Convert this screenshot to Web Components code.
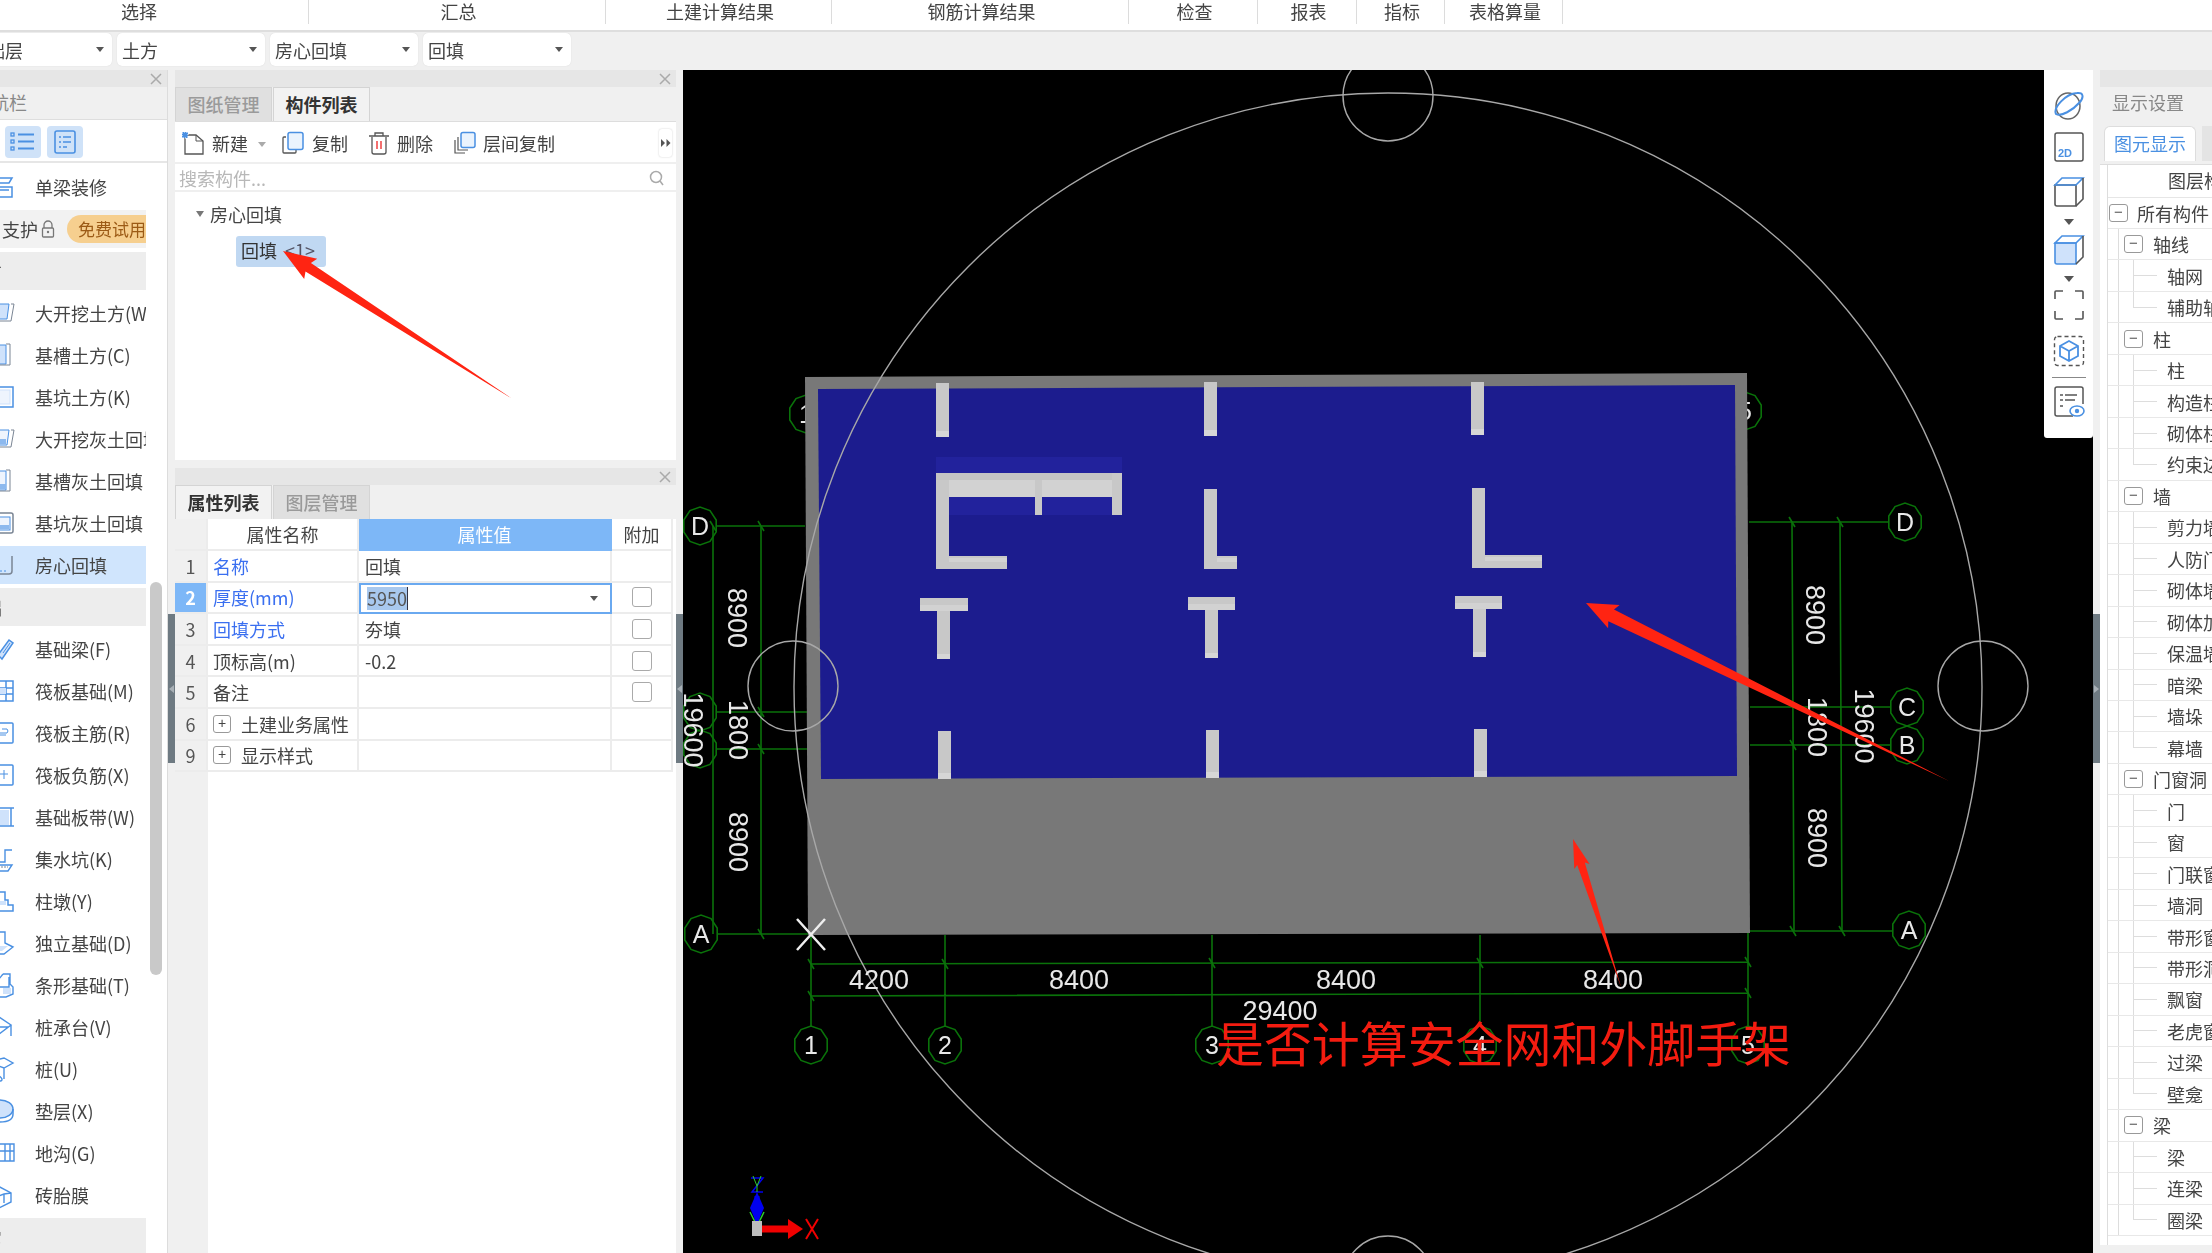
<!DOCTYPE html>
<html lang="zh">
<head>
<meta charset="utf-8">
<title>房心回填</title>
<style>
  html, body { margin: 0; padding: 0; width: 2212px; height: 1253px; overflow: hidden; background: #f0f0f0; }
  body { font-family: "Noto Sans CJK SC", "Liberation Sans", sans-serif; font-size: 18px; color: #444; }
</style>
</head>
<body>
<app-shell>
  <top-tabs></top-tabs>
  <combo-bar></combo-bar>
  <main-area>
    <nav-panel></nav-panel>
    <side-handle dir="left"></side-handle>
    <div style="width:501px;display:flex;flex-direction:column;flex:none">
      <component-panel></component-panel>
      <prop-panel></prop-panel>
    </div>
    <side-handle dir="left"></side-handle>
    <cad-view><view-tools></view-tools></cad-view>
    <side-handle dir="right"></side-handle>
    <display-panel></display-panel>
  </main-area>
  <annot-layer></annot-layer>
</app-shell>

<script>
const BLUE = '#4a90e2', GREY = '#7a8594', FILL = '#cfe2fb';

class AppShell extends HTMLElement {
  constructor() {
    super();
    this.attachShadow({ mode: 'open' }).innerHTML = `
      <style>
        :host { display: flex; flex-direction: column; position: relative; width: 2212px; height: 1253px; overflow: hidden; filter: blur(.45px); }
      </style>
      <slot></slot>`;
  }
}

class MainArea extends HTMLElement {
  constructor() {
    super();
    this.attachShadow({ mode: 'open' }).innerHTML = `
      <style>:host { display: flex; height: 1183px; flex: none; }</style><slot></slot>`;
  }
}

class TopTabs extends HTMLElement {
  constructor() {
    super();
    // widths come from the separators in the reference
    const tabs = [['选择', 342], ['汇总', 297], ['土建计算结果', 226], ['钢筋计算结果', 297], ['检查', 129], ['报表', 99], ['指标', 88], ['表格算量', 118]];
    this.attachShadow({ mode: 'open' }).innerHTML = `
      <style>
        :host { display: flex; height: 30px; background: #fff; border-bottom: 2px solid #dedede; flex: none; }
        div { height: 24px; line-height: 22px; text-align: center; padding-left: 3px; border-right: 1px solid #dcdcdc; box-sizing: border-box; flex: none; color: #444; }
        div:first-of-type { margin-left: -33px; }
      </style>
      ${tabs.map(([t, w]) => `<div style="width:${w}px">${t}</div>`).join('')}`;
  }
}

class ComboBar extends HTMLElement {
  constructor() {
    super();
    const combos = ['基础层', '土方', '房心回填', '回填'];
    this.attachShadow({ mode: 'open' }).innerHTML = `
      <style>
        :host { display: flex; gap: 5px; height: 38px; padding-top: 1px; margin-left: -36px; flex: none; background: #f0f0f0; box-sizing: border-box; }
        div { width: 148px; height: 33px; background: #fff; border-radius: 5px; display: flex; align-items: center; justify-content: space-between; padding: 0 8px 0 5px; box-sizing: border-box; box-shadow: 0 0 1px #ccc; }
        i { width: 0; height: 0; border: 4px solid transparent; border-top: 5px solid #555; border-bottom: 0; }
      </style>
      ${combos.map(t => `<div><span>${t}</span><i></i></div>`).join('')}`;
  }
}

class SideHandle extends HTMLElement {
  constructor() {
    super();
    const left = this.getAttribute('dir') === 'left';
    this.attachShadow({ mode: 'open' }).innerHTML = `
      <style>
        :host { display: block; width: 7px; flex: none; background: #f0f0f0; }
        div { margin-top: 544px; height: 149px; background: #6e7a82; display: flex; align-items: center; justify-content: center; }
        i { width: 0; height: 0; border: 4px solid transparent; ${left ? 'border-right: 5px solid #a8b0b6; border-left: 0' : 'border-left: 5px solid #a8b0b6; border-right: 0'}; }
      </style>
      <div><i></i></div>`;
  }
}

class NavPanel extends HTMLElement {
  constructor() {
    super();
    const ic = {
      kw: `<path d="M-4 5H9L7 20H-4Z" fill="${FILL}" stroke="${BLUE}"/><path d="M11 5H14L11 22H-4" fill="none" stroke="${GREY}"/>`,
      cao: `<path d="M-2 4H6V23H-2Z" fill="${FILL}" stroke="${BLUE}"/><path d="M6 3H10V24H-2" fill="none" stroke="${GREY}"/>`,
      keng: `<rect x="-4" y="4" width="17" height="20" fill="none" stroke="${BLUE}" stroke-width="1.5"/><rect x="-4" y="7" width="14" height="14" fill="#eef4fd" stroke="${FILL}"/>`,
      hk: `<path d="M-4 5H9L7 20H-4Z" fill="#eef4fd" stroke="${BLUE}"/><rect x="0" y="14" width="6" height="5" fill="#8db9ee"/><path d="M11 5H14L11 22H-4" fill="none" stroke="${GREY}"/>`,
      hc: `<path d="M-2 4H6V23H-2Z" fill="#eef4fd" stroke="${BLUE}"/><rect x="0" y="17" width="6" height="5" fill="#8db9ee"/><path d="M6 3H10V24H-2" fill="none" stroke="${GREY}"/>`,
      hp: `<rect x="-4" y="4" width="17" height="20" rx="2" fill="none" stroke="${GREY}" stroke-width="1.5"/><rect x="-4" y="8" width="14" height="13" fill="#eef4fd" stroke="${BLUE}"/><rect x="0" y="16" width="9" height="4" fill="#8db9ee"/>`,
      fx: `<path d="M12 5V20Q12 23 9 23H-4" fill="none" stroke="${GREY}" stroke-width="1.5"/><path d="M0 20H8" stroke="${BLUE}" stroke-dasharray="2 2"/>`,
      beam: `<path d="M-2 20L9 5L13 8L2 24Z" fill="${FILL}" stroke="${BLUE}" stroke-width="1.5"/><path d="M3 18L10 8" stroke="${BLUE}"/>`,
      raft: `<path d="M-4 4H13V24H-4ZM6 4V24M-4 11H13M-4 17H13" fill="none" stroke="${BLUE}" stroke-width="1.5"/><path d="M-2 11H6V17H-2Z" fill="${FILL}"/>`,
      rm: `<rect x="-4" y="4" width="17" height="20" rx="1" fill="none" stroke="${BLUE}" stroke-width="1.5"/><path d="M-2 14H7Q9 12 7 10H2M-2 16H6" fill="none" stroke="${BLUE}"/>`,
      rn: `<rect x="-4" y="4" width="17" height="20" rx="1" fill="none" stroke="${BLUE}" stroke-width="1.5"/><path d="M-2 13H8M4 9V18" fill="none" stroke="${BLUE}"/>`,
      band: `<path d="M-4 5H14M-4 23H14M11 5V23" fill="none" stroke="${BLUE}" stroke-width="1.5"/><rect x="-4" y="7" width="13" height="15" fill="${FILL}"/>`,
      sump: `<path d="M-4 17H5V5H12M-4 20H12L8 26H-4" fill="none" stroke="${BLUE}" stroke-width="1.4"/><path d="M-2 22H8" stroke="${GREY}" stroke-dasharray="2 1"/>`,
      pier: `<path d="M0 5H5V13H8V18H13V24H-4" fill="none" stroke="${BLUE}" stroke-width="1.5"/><rect x="-4" y="14" width="10" height="4" fill="${FILL}"/>`,
      iso: `<path d="M0 3H5V14L13 18L4 25H-4M0 3L-3 5" fill="none" stroke="${BLUE}" stroke-width="1.4"/><path d="M-2 17H8L2 22H-4Z" fill="${FILL}"/>`,
      strip: `<path d="M3 3H10V13L13 16V23L6 26H-4M3 3L-1 8V16H9V6" fill="none" stroke="${BLUE}" stroke-width="1.4"/><rect x="3" y="17" width="8" height="6" fill="${FILL}"/>`,
      cap: `<path d="M-4 2L11 12L-2 22M11 12V23M-4 22L-1 14L8 14" fill="none" stroke="${BLUE}" stroke-width="1.4"/>`,
      pile: `<path d="M-4 5L4 3L13 8L4 13L-4 10M4 13V24M-4 24Q2 28 2 24Q0 20 -4 21" fill="none" stroke="${BLUE}" stroke-width="1.4"/>`,
      pad: `<ellipse cx="0" cy="12" rx="13" ry="9" fill="${FILL}" stroke="${BLUE}" stroke-width="1.5"/><path d="M13 12V17Q13 25 0 25" fill="none" stroke="${BLUE}" stroke-width="1.5"/>`,
      ditch: `<path d="M-4 5H14V22H-4M-4 12H14M5 5V22M10 5V22" fill="none" stroke="${BLUE}" stroke-width="1.4"/>`,
      tire: `<path d="M-4 4L11 12V21L-1 27M-4 16L4 13L11 12M4 13V22" fill="none" stroke="${BLUE}" stroke-width="1.4"/>`,
      deco: `<path d="M-4 5H12L9 10H-4M-4 14H12V24H-4M0 17H9" fill="none" stroke="${BLUE}" stroke-width="1.5"/>`
    };
    const item = (txt, k, on) => `<li class="${on ? 'on' : ''}"><svg viewBox="0 0 16 28" width="16" height="28">${ic[k]}</svg><span>${txt}</span></li>`;
    const sec = (txt) => `<li class="sec"><span>${txt}</span></li>`;
    const rows = [
      item('单梁装修', 'deco'),
      `<li class="pay"><span class="zh">支护</span><svg viewBox="0 0 14 18" width="14" height="18"><path d="M3 8V5a4 4 0 0 1 8 0V8" fill="none" stroke="#777" stroke-width="1.3"/><rect x="1.5" y="8" width="11" height="9" rx="1" fill="none" stroke="#777" stroke-width="1.3"/><circle cx="7" cy="12" r="1.2" fill="#777"/></svg><b>免费试用</b></li>`,
      sec('土方'),
      item('大开挖土方(W', 'kw'), item('基槽土方(C)', 'cao'), item('基坑土方(K)', 'keng'),
      item('大开挖灰土回填', 'hk'), item('基槽灰土回填', 'hc'), item('基坑灰土回填', 'hp'),
      item('房心回填', 'fx', true),
      sec('基础'),
      item('基础梁(F)', 'beam'), item('筏板基础(M)', 'raft'), item('筏板主筋(R)', 'rm'), item('筏板负筋(X)', 'rn'),
      item('基础板带(W)', 'band'), item('集水坑(K)', 'sump'), item('柱墩(Y)', 'pier'), item('独立基础(D)', 'iso'),
      item('条形基础(T)', 'strip'), item('桩承台(V)', 'cap'), item('桩(U)', 'pile'), item('垫层(X)', 'pad'),
      item('地沟(G)', 'ditch'), item('砖胎膜', 'tire'),
      sec('其它')
    ];
    this.attachShadow({ mode: 'open' }).innerHTML = `
      <style>
        :host { display: flex; flex-direction: column; width: 168px; flex: none; position: relative; background: #fff; border-right: 1px solid #dcdcdc; box-sizing: border-box; overflow: hidden; }
        .head { height: 17px; background: #e6e6e6; display: flex; justify-content: flex-end; padding-right: 5px; flex: none; }
        .title { height: 33px; line-height: 30px; background: #f0f0f0; border-bottom: 1px solid #dedede; color: #888; margin-left: -27px; padding-left: 0; flex: none; box-sizing: border-box; }
        .sw { height: 43px; display: flex; gap: 6px; padding: 6px 0 0 5px; border-bottom: 2px solid #e6e6e6; box-sizing: border-box; flex: none; }
        .sw span { width: 36px; height: 32px; background: #cfe2f8; border-radius: 4px; display: flex; align-items: center; justify-content: center; }
        ul { list-style: none; margin: 3px 0 0; padding: 0; width: 146px; display: flex; flex-direction: column; overflow: hidden; flex: none; }
        li { height: 38px; margin: 2px 0; flex: none; display: flex; align-items: center; white-space: nowrap; overflow: hidden; font-size: 18px; color: #444; }
        li svg { flex: none; }
        li > svg:first-child { margin-right: 19px; }
        li.on { background: #d0e5fd; }
        li.sec { background: #ededed; color: #555; }
        li.sec span { margin-left: -34px; }
        li.pay { background: #f2f2f2; }
        li.pay .zh { margin-left: 2px; margin-right: 3px; }
        li.pay b { margin-left: 12px; width: 79px; height: 28px; line-height: 27px; font-weight: 400; font-size: 17px; background: #f6cf8f; color: #9c5b16; border-radius: 14px 0 0 14px; padding-left: 11px; box-sizing: border-box; flex: none; overflow: hidden; }
        .bar { position: absolute; left: 150px; top: 512px; width: 12px; height: 393px; background: #c9c9c9; border-radius: 6px; }
      </style>
      <div class="head"><panel-close></panel-close></div>
      <div class="title">导航栏</div>
      <div class="sw">
        <span><svg width="26" height="22" viewBox="0 0 26 22" fill="none" stroke="${BLUE}" stroke-width="2"><rect x="1" y="2" width="3" height="3" stroke-width="1.3"/><rect x="1" y="9" width="3" height="3" stroke-width="1.3"/><rect x="1" y="16" width="3" height="3" stroke-width="1.3"/><path d="M8 3.5H24M8 10.5H24M8 17.5H24"/></svg></span>
        <span><svg width="24" height="24" viewBox="0 0 24 24" fill="none" stroke="${BLUE}" stroke-width="1.6"><rect x="2" y="1" width="20" height="22" rx="2"/><path d="M6 7H8M10 7H18M6 12H8M10 12H18M6 17H8M10 17H14"/></svg></span>
      </div>
      <ul>${rows.join('')}</ul>
      <div class="bar"></div>`;
  }
}

class PanelClose extends HTMLElement {
  constructor() {
    super();
    this.attachShadow({ mode: 'open' }).innerHTML = `
      <style>:host { display: flex; align-items: center; height: 17px; }</style>
      <svg width="12" height="12" viewBox="0 0 12 12"><path d="M1 1L11 11M11 1L1 11" stroke="#aaa" stroke-width="1.5"/></svg>`;
  }
}

class ComponentPanel extends HTMLElement {
  constructor() {
    super();
    const I = {
      add: `<svg width="24" height="24" viewBox="0 0 24 24" fill="none"><path d="M4 4H15L22 10V23H4Z" stroke="#555" stroke-width="1.3"/><path d="M15 4V10H22" stroke="#555"/><path d="M1 1H7V7H1Z" fill="#4a90e2" stroke-dasharray="1 1" stroke="#fff"/></svg>`,
      copy: `<svg width="24" height="24" viewBox="0 0 24 24" fill="none"><path d="M5 6H3a1 1 0 0 0-1 1V21a1 1 0 0 0 1 1H14a1 1 0 0 0 1-1V19" stroke="#555" stroke-width="1.3"/><rect x="7" y="1.5" width="15" height="17" rx="2" fill="#eaf3fd" stroke="${BLUE}" stroke-width="1.5"/></svg>`,
      del: `<svg width="22" height="24" viewBox="0 0 22 24" fill="none" stroke="#555" stroke-width="1.3"><path d="M4 6V21a2 2 0 0 0 2 2H16a2 2 0 0 0 2-2V6M1 5H21M7 5V2H15V5"/><path d="M9 10V18M13 10V18" stroke="#e33" stroke-width="1.4"/></svg>`,
      lay: `<svg width="24" height="24" viewBox="0 0 24 24" fill="none"><path d="M3 9V22H13M6 6V19H16" stroke="#555" stroke-width="1.2"/><rect x="9" y="1.5" width="14" height="15" rx="2" fill="#eaf3fd" stroke="${BLUE}" stroke-width="1.5"/></svg>`
    };
    this.attachShadow({ mode: 'open' }).innerHTML = `
      <style>
        :host { display: flex; flex-direction: column; height: 390px; background: #fff; flex: none; }
        .head { height: 17px; background: #e6e6e6; display: flex; justify-content: flex-end; padding-right: 5px; flex: none; }
        .tabs { height: 35px; background: #f0f0f0; display: flex; border-bottom: 1px solid #ddd; box-sizing: border-box; flex: none; }
        .tabs span { width: 97px; text-align: center; line-height: 32px; background: #e0e0e0; color: #9a9a9a; border: 1px solid #d4d4d4; border-bottom: 0; box-sizing: border-box; font-weight: 500; }
        .tabs span.on { background: #f2f2f2; color: #333; font-weight: 700; margin-left: 1px; }
        .tools { height: 42px; display: flex; align-items: center; padding: 2px 4px 0 6px; border-bottom: 2px solid #efefef; box-sizing: border-box; flex: none; }
        .tools svg { flex: none; margin-right: 7px; }
        .tools .more svg { margin: 0; }
        .tools span { flex: none; }
        .caret { width: 0; height: 0; border: 4px solid transparent; border-top: 5px solid #aaa; border-bottom: 0; margin: 2px 0 0 10px; flex: none; }
        .gap { width: 15px; flex: none; }
        .more { margin-left: auto; width: 13px; height: 28px; background: #fff; border-radius: 3px; box-shadow: 0 0 2px #ccc; display: flex; align-items: center; justify-content: center; flex: none; }
        .search { height: 28px; display: flex; align-items: center; justify-content: space-between; padding: 2px 12px 0 4px; border-bottom: 2px solid #efefef; color: #b8b8b8; box-sizing: border-box; flex: none; }
        .tree { padding: 9px 0 0 21px; }
        .node { display: flex; align-items: center; height: 26px; gap: 6px; }
        .node i { width: 0; height: 0; border: 4.5px solid transparent; border-top: 6px solid #777; border-bottom: 0; }
        .leaf { margin: 9px 0 0 40px; width: 90px; height: 31px; background: #c0d8f2; border-radius: 3px; line-height: 29px; padding-left: 5px; box-sizing: border-box; color: #333; white-space: nowrap; }
        .leaf small { font-size: 18px; color: #556; margin-left: 8px; }
      </style>
      <div class="head"><panel-close></panel-close></div>
      <div class="tabs"><span>图纸管理</span><span class="on">构件列表</span></div>
      <div class="tools">
        ${I.add}<span>新建</span><i class="caret"></i><div class="gap"></div>
        ${I.copy}<span>复制</span><div class="gap" style="width:20px"></div>
        ${I.del}<span>删除</span><div class="gap" style="width:19px"></div>
        ${I.lay}<span>层间复制</span>
        <div class="more"><svg width="10" height="8" viewBox="0 0 10 8" fill="#555"><path d="M0 0L4 4L0 8ZM5.5 0L9.5 4L5.5 8Z"/></svg></div>
      </div>
      <div class="search"><span>搜索构件...</span><svg width="15" height="17" viewBox="0 0 15 17" fill="none" stroke="#aaa" stroke-width="1.5"><circle cx="7" cy="7" r="5.5"/><path d="M11 11L14 15"/></svg></div>
      <div class="tree">
        <div class="node"><i></i><span>房心回填</span></div>
        <div class="leaf">回填<small>&lt;1&gt;</small></div>
      </div>`;
  }
}

class PropPanel extends HTMLElement {
  constructor() {
    super();
    const rows = [
      ['1', '名称', '回填', 0, 1],
      ['2', '厚度(mm)', '5950', 1, 1, 'edit'],
      ['3', '回填方式', '夯填', 1, 1],
      ['4', '顶标高(m)', '-0.2', 1, 0],
      ['5', '备注', '', 1, 0],
      ['6', '土建业务属性', '', 0, 0, 'plus'],
      ['9', '显示样式', '', 0, 0, 'plus']
    ];
    const body = rows.map(([n, name, val, chk, link, kind]) => `
      <div class="no ${kind === 'edit' ? 'sel' : ''}">${n}</div>
      <div class="c name ${link ? 'link' : ''}">${kind === 'plus' ? '<b>+</b>' : ''}${name}</div>
      <div class="c val ${kind === 'edit' ? 'edit' : ''}">${kind === 'edit' ? `<em>${val}</em><i></i>` : val}</div>
      <div class="c add">${chk ? '<u></u>' : ''}</div>`).join('');
    this.attachShadow({ mode: 'open' }).innerHTML = `
      <style>
        :host { display: flex; flex-direction: column; margin-top: 8px; height: 785px; background: #fff; flex: none; }
        .head { height: 17px; background: #e6e6e6; display: flex; justify-content: flex-end; padding-right: 5px; flex: none; }
        .tabs { height: 34px; background: #f0f0f0; display: flex; flex: none; }
        .tabs span { width: 97px; text-align: center; line-height: 32px; background: #e0e0e0; color: #9a9a9a; border: 1px solid #d4d4d4; border-bottom: 0; box-sizing: border-box; font-weight: 500; margin-right: 1px; }
        .tabs span.on { background: #f2f2f2; color: #333; font-weight: 700; }
        .grid { flex: 1; display: grid; grid-template-columns: 33px 151px 253px 61px; grid-template-rows: 32px; grid-auto-rows: 31.6px; align-content: start; background: linear-gradient(#f0f0f0,#f0f0f0) 0 0/33px 100% no-repeat; }
        .grid > div { box-sizing: border-box; border-right: 2px solid #ececec; border-bottom: 2px solid #ececec; display: flex; align-items: center; white-space: nowrap; }
        .th { justify-content: center; color: #444; }
        .th.blue { background: #7db7f7; color: #fff; border-color: #7db7f7 !important; }
        .no { justify-content: center; background: #f0f0f0; color: #555; }
        .no.sel { background: #7db7f7; color: #fff; font-weight: 700; }
        .name { padding-left: 5px; color: #444; }
        .link { color: #3a6ff0; }
        .name b { width: 18px; height: 18px; border: 1px solid #999; border-radius: 3px; box-sizing: border-box; font: 400 14px/15px "Liberation Sans", sans-serif; text-align: center; margin-right: 10px; color: #444; flex: none; }
        .val { padding-left: 6px; }
        .val.edit { border: 2px solid #6aa9f0 !important; padding: 0 12px 0 6px; justify-content: space-between; }
        .val em { font-style: normal; background: #a8c8ee; border-right: 1.5px solid #334; line-height: 23px; color: #555; }
        .val i { width: 0; height: 0; border: 4px solid transparent; border-top: 5px solid #555; border-bottom: 0; }
        .add { justify-content: center; }
        .add u { width: 20px; height: 20px; border: 1.5px solid #aaa; border-radius: 3px; box-sizing: border-box; display: block; }
      </style>
      <div class="head"><panel-close></panel-close></div>
      <div class="tabs"><span class="on">属性列表</span><span>图层管理</span></div>
      <div class="grid">
        <div class="th"></div><div class="th">属性名称</div><div class="th blue">属性值</div><div class="th">附加</div>
        ${body}
      </div>`;
  }
}

class CadView extends HTMLElement {
  // stretched 10-gon, the way the axis bubbles come out of the 3D view
  bubble(cx, cy, label) {
    let pts = [];
    for (let i = 0; i < 10; i++) {
      const a = (i + 0.5) * Math.PI / 5;
      pts.push((cx + 17 * Math.cos(a)).toFixed(1) + ',' + (cy + 19 * Math.sin(a)).toFixed(1));
    }
    return `<polygon points="${pts.join(' ')}" class="g" fill="none"/>` +
      (label ? `<text x="${cx}" y="${cy + 9}" class="lb" text-anchor="middle">${label}</text>` : '');
  }

  vtext(x, y, t) {
    return `<text transform="translate(${x} ${y}) rotate(90)" text-anchor="middle" dy="9" class="dim">${t}</text>`;
  }

  tick(x, y) {
    return `<path d="M${x - 3} ${y - 5}L${x + 3} ${y + 5}" class="g"/>`;
  }

  rect(x1, y1, x2, y2, fill = '#c8c8c8') {
    return `<rect x="${x1}" y="${y1}" width="${x2 - x1}" height="${y2 - y1}" fill="${fill}"/>`;
  }

  column(x, y, w, h) {
    return this.rect(x, y, x + w, y + h) + this.rect(x, y + h - 6, x + w, y + h, '#d6d6d6');
  }

  tee(bx1, bx2, by, sx, sy2) {
    return this.rect(bx1, by, bx2, by + 13) + this.rect(bx1, by + 7, bx2, by + 13, '#d2d2d2') +
      this.rect(sx, by + 13, sx + 13, sy2) + this.rect(sx, sy2 - 5, sx + 13, sy2, '#d6d6d6');
  }

  ell(x, y1, x2, y2) {
    return this.rect(x, y1, x + 13, y2) + this.rect(x, y2 - 13, x2, y2) + this.rect(x + 13, y2 - 11, x2, y2 - 7, '#d2d2d2');
  }

  constructor() {
    super();
    let s = '';

    // grid lines and bubbles that sit behind the building
    s += this.bubble(806, 414, '1') + this.bubble(1745, 411, '5');
    s += this.bubble(700, 712) + this.bubble(700, 749);
    s += `<path class="g" d="M716 526H805M716 712H808M716 749H808M718 934H810
      M713 526V934M761 526V934
      M1749 522H1888M1750 707H1890M1750 745H1890M1750 931H1892
      M1792 522L1794 931M1840 522L1842 931
      M811 935V1026M945 935V1026M1212 935V1026M1480 935V1026M1748 933V1026
      M811 964L1748 962M811 996L1748 993"/>`;
    [[713, 526], [761, 526], [761, 712], [761, 749], [761, 934], [1792, 522], [1840, 522], [1793, 745], [1793, 931], [1842, 931]].forEach(([x, y]) => { s += this.tick(x, y); });
    [[811, 964], [945, 964], [1212, 963], [1480, 963], [1748, 962], [811, 996], [1748, 993]].forEach(([x, y]) => { s += this.tick(x, y); });

    // building
    s += `<polygon points="805,377 1747,373 1750,933 808,935" fill="#787878"/>`;
    s += `<polygon points="818,389 1735,385 1737,776 821,779" fill="#1c1c8e"/>`;
    s += this.rect(936, 457, 1122, 473, '#22229c') + this.rect(949, 497, 1122, 515, '#22229c');

    [[936, 383, 54], [1204, 382, 54], [1471, 382, 53], [938, 731, 48], [1206, 730, 48], [1474, 729, 48]].forEach(([x, y, h]) => { s += this.column(x, y, 13, h); });
    s += this.tee(920, 968, 598, 937, 659) + this.tee(1188, 1235, 597, 1205, 658) + this.tee(1455, 1502, 596, 1473, 657);
    s += this.ell(936, 473, 1007, 569) + this.ell(1204, 489, 1237, 569) + this.ell(1472, 488, 1542, 568);
    s += this.rect(936, 473, 1122, 497, '#d2d2d2') + this.rect(936, 473, 1122, 480, '#c4c4c4');
    s += this.rect(1112, 473, 1122, 515) + this.rect(1035, 480, 1042, 515) + this.rect(936, 480, 949, 500);

    // outer circle and the four small ones
    s += `<g fill="none" stroke="#a8a8a8" stroke-width="1.4">
      <circle cx="1388" cy="687" r="594"/>
      <circle cx="1388" cy="96" r="45"/><circle cx="793" cy="686" r="45"/>
      <circle cx="1983" cy="686" r="45"/><circle cx="1388" cy="1281" r="45"/></g>`;

    // axis bubbles in front
    s += this.bubble(700, 526, 'D') + this.bubble(1905, 522, 'D') + this.bubble(1907, 707, 'C') + this.bubble(1907, 745, 'B');
    s += this.bubble(701, 934, 'A') + this.bubble(1909, 930, 'A');
    [[811, '1'], [945, '2'], [1212, '3'], [1480, '4'], [1748, '5']].forEach(([x, t]) => { s += this.bubble(x, 1045, t); });

    // dimensions
    [[879, '4200'], [1079, '8400'], [1346, '8400'], [1613, '8400']].forEach(([x, t]) => {
      s += `<text x="${x}" y="989" text-anchor="middle" class="dim">${t}</text>`;
    });
    s += `<text x="1280" y="1020" text-anchor="middle" class="dim">29400</text>`;
    s += this.vtext(737, 618, '8900') + this.vtext(738, 730, '1800') + this.vtext(738, 842, '8900');
    s += this.vtext(1815, 615, '8900') + this.vtext(1817, 727, '1800') + this.vtext(1817, 838, '8900');
    s += this.vtext(1864, 726, '19600') + this.vtext(693, 730, '19600');

    // origin mark
    s += `<path d="M797 919L825 950M825 919L797 950" stroke="#eee" stroke-width="2.5" fill="none"/>`;

    // axis triad
    s += `<path d="M757 1196V1232" stroke="#0000f0" stroke-width="5"/>
      <polygon points="757,1192 764,1208 757,1224 750,1208" fill="#0000f0"/>
      <path d="M751 1178H763L752 1192H763" stroke="#0000f0" fill="none" stroke-width="1.5"/>
      <path d="M753 1176L757 1186L761 1176M757 1186V1192" stroke="#2ecc2e" fill="none" stroke-width="1"/>
      <path d="M750 1212L757 1226L764 1212" stroke="#2ecc2e" fill="none" stroke-width="1.5"/>
      ${this.rect(752, 1221, 762, 1236, '#bdbdbd')}
      <path d="M762 1229H790" stroke="#f00000" stroke-width="7"/>
      <polygon points="788,1219 803,1229 788,1239" fill="#f00000"/>
      <path d="M806 1219L818 1239M818 1219L806 1239" stroke="#f00000" stroke-width="2" fill="none"/>`;

    this.attachShadow({ mode: 'open' }).innerHTML = `
      <style>
        :host { display: block; position: relative; width: 1410px; height: 1183px; background: #000; flex: none; overflow: hidden; }
        svg { display: block; }
        .g { stroke: #0a720a; stroke-width: 1.6; fill: none; }
        .dim, .lb { font-family: "Liberation Sans", sans-serif; font-size: 27px; fill: #e8e8e8; }
        .lb { font-size: 25px; }
      </style>
      <svg viewBox="683 70 1410 1183" width="1410" height="1183">${s}</svg>
      <slot></slot>`;
  }
}

class ViewTools extends HTMLElement {
  constructor() {
    super();
    const cube = (fill) => `<svg width="32" height="32" viewBox="0 0 32 32" fill="none"><path d="M2 9H23V30H4a2 2 0 0 1-2-2Z" fill="${fill}" stroke="${fill === 'none' ? '#555' : BLUE}" stroke-width="1.6"/><path d="M2 9L9 2H30L23 9Z" stroke="${BLUE}" stroke-width="1.6"/><path d="M30 2V23L23 30" stroke="#555" stroke-width="1.6"/></svg>`;
    this.attachShadow({ mode: 'open' }).innerHTML = `
      <style>
        :host { position: absolute; right: 0; top: 0; width: 49px; height: 368px; background: #fff; border-radius: 0 0 3px 3px; display: flex; flex-direction: column; align-items: center; padding-top: 20px; box-sizing: border-box; }
        svg { display: block; flex: none; }
        i { width: 0; height: 0; border: 5px solid transparent; border-top: 6px solid #555; border-bottom: 0; margin: 11px 0 9px; flex: none; }
        i.b { margin: 10px 0 7px; }
        hr { width: 34px; border: 0; border-top: 1.5px solid #888; margin: 10px 0 8px; flex: none; }
      </style>
      <svg width="32" height="30" viewBox="0 0 32 30" fill="none"><ellipse cx="15" cy="16" rx="12" ry="13" stroke="#666" stroke-width="1.5"/><path d="M3 24C0 18 12 4 24 3C31 2 31 8 26 13C20 20 8 27 3 24Z" stroke="${BLUE}" stroke-width="2"/></svg>
      <svg style="margin-top:12px" width="30" height="30" viewBox="0 0 30 30" fill="none"><rect x="1" y="1" width="28" height="28" rx="2" stroke="#555" stroke-width="1.5"/><text x="4" y="25" font-family="Liberation Sans, sans-serif" font-size="11" font-weight="700" fill="${BLUE}">2D</text></svg>
      <div style="margin-top:14px">${cube('none')}</div><i></i>
      ${cube(FILL)}<i class="b"></i>
      <svg width="32" height="32" viewBox="0 0 32 32" fill="none" stroke="#555" stroke-width="1.6"><path d="M2 10V3a1 1 0 0 1 1-1H10M22 2H29a1 1 0 0 1 1 1V10M30 22V29a1 1 0 0 1-1 1H22M10 30H3a1 1 0 0 1-1-1V22"/></svg>
      <svg style="margin-top:14px" width="32" height="32" viewBox="0 0 32 32" fill="none"><rect x="1.5" y="1.5" width="29" height="29" rx="3" stroke="#555" stroke-width="1.4" stroke-dasharray="4 3"/><path d="M16 6L25 11V21L16 26L7 21V11ZM7 11L16 16L25 11M16 16V26" stroke="${BLUE}" stroke-width="1.8"/></svg>
      <hr>
      <svg width="32" height="32" viewBox="0 0 32 32" fill="none"><path d="M20 30H4a2 2 0 0 1-2-2V3a2 2 0 0 1 2-2H28a2 2 0 0 1 2 2V18" stroke="#555" stroke-width="1.5"/><path d="M7 9H10M12 9H24M7 14H10M12 14H22M7 20H10" stroke="#555" stroke-width="1.4"/><ellipse cx="24" cy="25" rx="7" ry="5" stroke="${BLUE}" stroke-width="1.6"/><circle cx="24" cy="25" r="2.2" fill="${BLUE}"/></svg>`;
  }
}

class DisplayPanel extends HTMLElement {
  constructor() {
    super();
    const rows = [
      [0, '所有构件'], [1, '轴线', 1], [2, '轴网', 1], [2, '辅助轴', 2], [1, '柱', 1], [2, '柱', 1], [2, '构造柱', 1], [2, '砌体柱', 1], [2, '约束边', 2],
      [1, '墙', 1], [2, '剪力墙', 1], [2, '人防门', 1], [2, '砌体墙', 1], [2, '砌体加', 1], [2, '保温墙', 1], [2, '暗梁', 1], [2, '墙垛', 1], [2, '幕墙', 2],
      [1, '门窗洞', 1], [2, '门', 1], [2, '窗', 1], [2, '门联窗', 1], [2, '墙洞', 1], [2, '带形窗', 1], [2, '带形洞', 1], [2, '飘窗', 1], [2, '老虎窗', 1], [2, '过梁', 1], [2, '壁龛', 2],
      [1, '梁', 1], [2, '梁', 1], [2, '连梁', 1], [2, '圈梁', 2]
    ];
    const html = rows.map(([lv, t, end]) => {
      if (lv === 0) return `<div class="r l0"><b>−</b><span>${t}</span></div>`;
      if (lv === 1) return `<div class="r l1"><b>−</b><span>${t}</span></div>`;
      return `<div class="r l2 ${end === 2 ? 'end' : ''}"><span>${t}</span></div>`;
    }).join('');
    this.attachShadow({ mode: 'open' }).innerHTML = `
      <style>
        :host { display: flex; flex-direction: column; width: 112px; flex: none; overflow: hidden; background: #fff; white-space: nowrap; }
        .head { height: 17px; background: #e6e6e6; flex: none; }
        .title { height: 33px; line-height: 30px; background: #f0f0f0; padding-left: 12px; color: #888; flex: none; }
        .tabs { height: 45px; background: #f0f0f0; padding: 6px 0 0 4px; display: flex; gap: 6px; border-bottom: 1px solid #ddd; box-sizing: border-box; flex: none; }
        .tabs span { width: 92px; height: 35px; background: #fff; color: ${BLUE}; border: 1px solid #ddd; border-bottom: 0; border-radius: 6px 6px 0 0; box-sizing: border-box; text-align: center; line-height: 32px; flex: none; }
        .tabs i { width: 20px; height: 35px; background: #e4e4e4; flex: none; }
        .box { margin: 0 0 0 7px; flex: 1; border-left: 1px solid #ddd; min-height: 0; }
        .hd { height: 32.5px; line-height: 30px; padding-left: 60px; border-bottom: 1px solid #e6e6e6; box-sizing: border-box; }
        .r { height: 31.47px; display: flex; align-items: center; box-sizing: border-box; border-bottom: 1px solid #e8e8e8; }
        .r b { width: 19px; height: 18px; border: 1.5px solid #999; border-radius: 3px; box-sizing: border-box; font: 400 15px/14px "Liberation Sans", sans-serif; text-align: center; color: #555; flex: none; background: #fff; }
        .l0 { padding-left: 1px; gap: 9px; }
        .l1 { padding-left: 16px; gap: 10px; background: linear-gradient(#ddd,#ddd) 10px 0/1px 100% no-repeat; }
        .l2 { padding-left: 59px; background:
          linear-gradient(#ddd,#ddd) 10px 0/1px 100% no-repeat,
          linear-gradient(#ddd,#ddd) 25px 0/1px 100% no-repeat,
          linear-gradient(#ddd,#ddd) 25px 50%/24px 1px no-repeat; }
        .l2.end { background:
          linear-gradient(#ddd,#ddd) 10px 0/1px 100% no-repeat,
          linear-gradient(#ddd,#ddd) 25px 0/1px 50% no-repeat,
          linear-gradient(#ddd,#ddd) 25px 50%/24px 1px no-repeat; }
        .foot { height: 8px; background: #f0f0f0; flex: none; }
      </style>
      <div class="head"></div>
      <div class="title">显示设置</div>
      <div class="tabs"><span>图元显示</span><i></i></div>
      <div class="box"><div class="hd">图层构</div>${html}</div>
      <div class="foot"></div>`;
  }
}

class AnnotLayer extends HTMLElement {
  arrow(tx, ty, hx, hy, headLen, headW, shaftW) {
    const d = Math.hypot(hx - tx, hy - ty), ux = (hx - tx) / d, uy = (hy - ty) / d, nx = -uy, ny = ux;
    const bx = hx - ux * headLen, by = hy - uy * headLen;
    const p = (x, y) => x.toFixed(1) + ',' + y.toFixed(1);
    return `<polygon fill="#ff2412" points="${p(tx, ty)} ${p(bx + nx * shaftW / 2, by + ny * shaftW / 2)} ${p(bx + nx * headW / 2 - ux * 3, by + ny * headW / 2 - uy * 3)} ${p(hx, hy)} ${p(bx - nx * headW / 2 - ux * 3, by - ny * headW / 2 - uy * 3)} ${p(bx - nx * shaftW / 2, by - ny * shaftW / 2)}"/>`;
  }

  constructor() {
    super();
    this.attachShadow({ mode: 'open' }).innerHTML = `
      <style>
        :host { position: absolute; left: 0; top: 0; width: 2212px; height: 1253px; pointer-events: none; }
        text { font-family: "Noto Sans CJK SC", sans-serif; font-size: 48px; fill: #f41c10; }
      </style>
      <svg viewBox="0 0 2212 1253" width="2212" height="1253">
        ${this.arrow(511, 398, 283, 251, 30, 24, 10)}
        ${this.arrow(1949, 781, 1586, 603, 28, 26, 13)}
        ${this.arrow(1621, 987, 1573, 839, 26, 16, 8)}
        <text x="1216" y="1062" textLength="575" lengthAdjust="spacingAndGlyphs">是否计算安全网和外脚手架</text>
      </svg>`;
  }
}

customElements.define('app-shell', AppShell);
customElements.define('main-area', MainArea);
customElements.define('top-tabs', TopTabs);
customElements.define('combo-bar', ComboBar);
customElements.define('side-handle', SideHandle);
customElements.define('panel-close', PanelClose);
customElements.define('nav-panel', NavPanel);
customElements.define('component-panel', ComponentPanel);
customElements.define('prop-panel', PropPanel);
customElements.define('cad-view', CadView);
customElements.define('view-tools', ViewTools);
customElements.define('display-panel', DisplayPanel);
customElements.define('annot-layer', AnnotLayer);
</script>
</body>
</html>
